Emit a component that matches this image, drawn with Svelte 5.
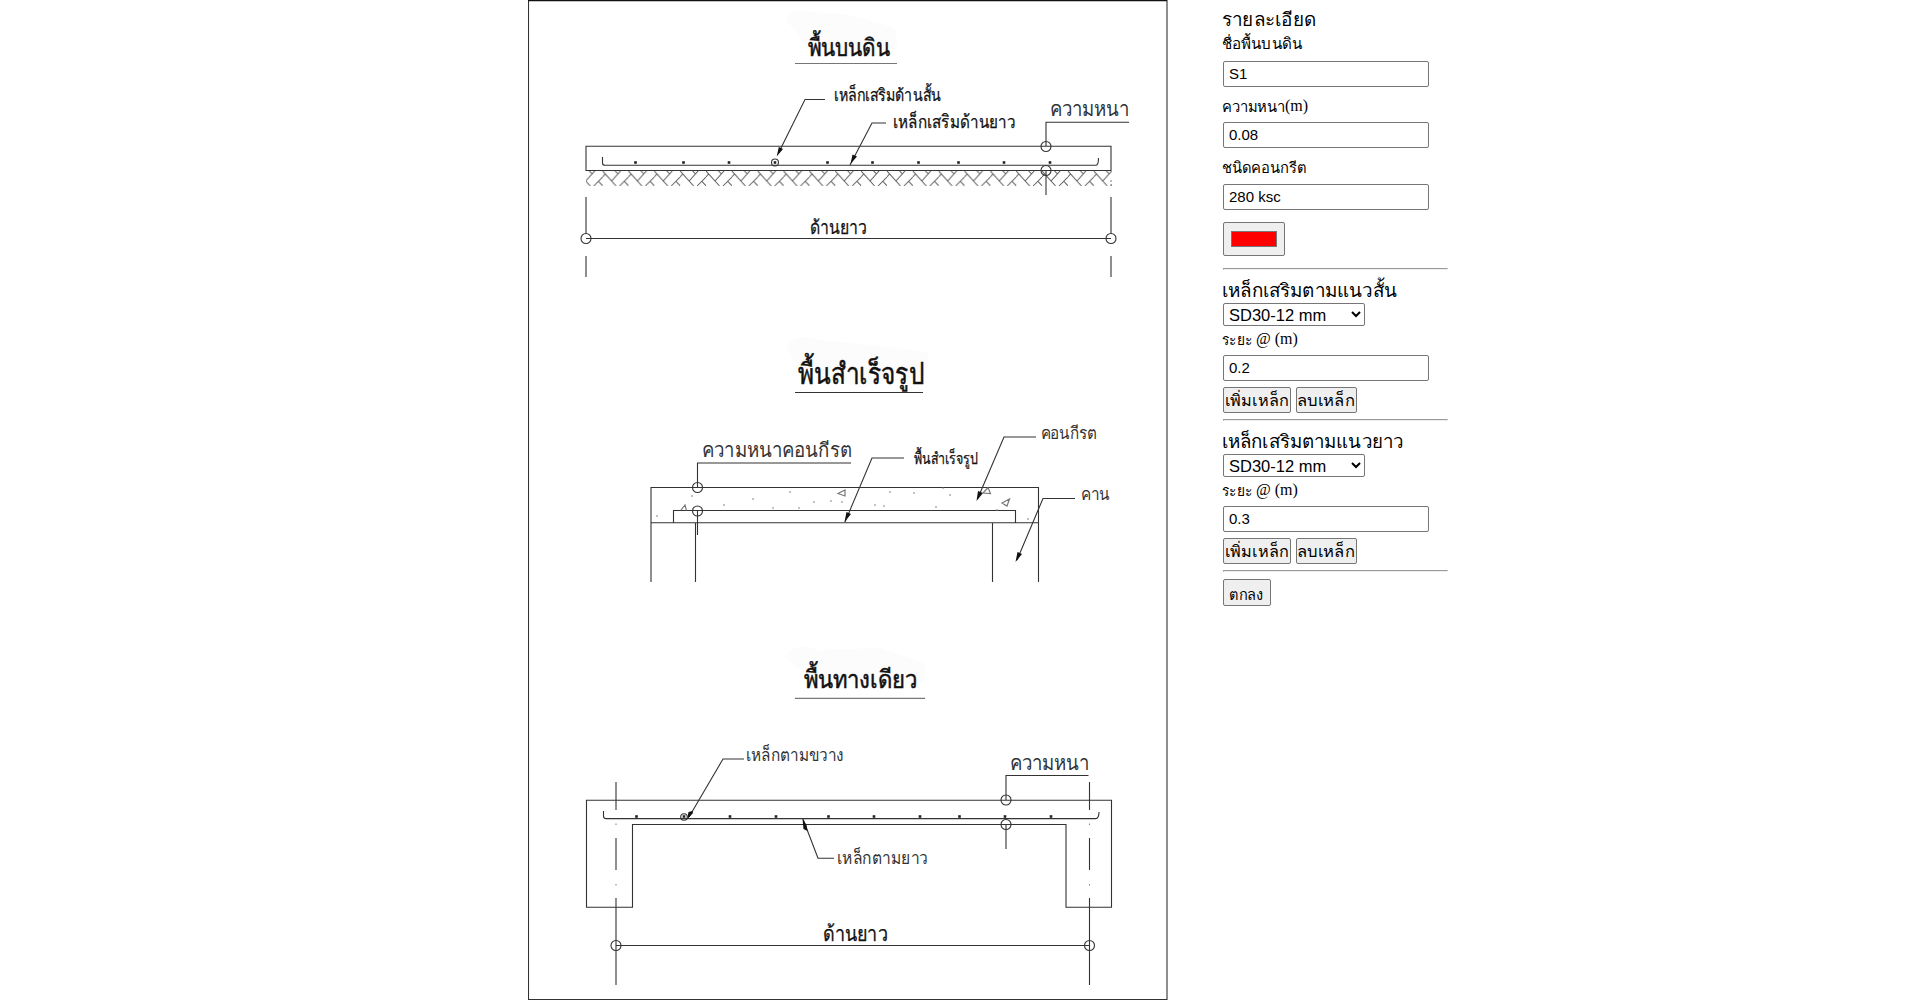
<script>
  let name = $state('S1');
  let thickness = $state('0.08');
  let concrete = $state('280 ksc');
  let color = $state('#ff0000');
  let bars = $state([
    { title: 'เหล็กเสริมตามแนวสั้น', size: 'SD30-12 mm', spacing: '0.2', w: 175 },
    { title: 'เหล็กเสริมตามแนวยาว', size: 'SD30-12 mm', spacing: '0.3', w: 181 }
  ]);

  // Drawing labels: t text, x start, y baseline, w width, s font size, k style
  const labels = [
    { t: 'พื้นบนดิน', x: 807.5, y: 56, w: 82, s: 24, k: 'heavy' },
    { t: 'เหล็กเสริมด้านสั้น', x: 834, y: 101, w: 107, s: 17, k: 'medium' },
    { t: 'เหล็กเสริมด้านยาว', x: 893, y: 127.5, w: 122, s: 18, k: 'medium' },
    { t: 'ความหนา', x: 1049.5, y: 116, w: 80, s: 20, k: 'thin' },
    { t: 'ด้านยาว', x: 810, y: 233.5, w: 57.5, s: 19, k: 'medium' },
    { t: 'พื้นสำเร็จรูป', x: 798, y: 384, w: 126, s: 29, k: 'heavy' },
    { t: 'ความหนาคอนกีรต', x: 702, y: 457, w: 150, s: 20, k: 'thin' },
    { t: 'พื้นสำเร็จรูป', x: 913.5, y: 463.5, w: 64.5, s: 16, k: 'medium' },
    { t: 'คอนกีรต', x: 1040.5, y: 439, w: 56.5, s: 17, k: 'thin' },
    { t: 'คาน', x: 1080.5, y: 500, w: 29, s: 18, k: 'thin' },
    { t: 'พื้นทางเดียว', x: 803.5, y: 688, w: 114, s: 25, k: 'heavy' },
    { t: 'เหล็กตามขวาง', x: 746, y: 760.5, w: 98, s: 18, k: 'thin' },
    { t: 'ความหนา', x: 1009.5, y: 770, w: 80, s: 20, k: 'thin' },
    { t: 'เหล็กตามยาว', x: 837, y: 864, w: 91, s: 18, k: 'thin' },
    { t: 'ด้านยาว', x: 823, y: 940.5, w: 65, s: 21, k: 'medium' }
  ];
  const dotsTop = [635.5, 683.5, 729, 775, 827.5, 872.5, 918.5, 958.5, 1004, 1050];
  const dotsLow = [636.5, 684, 730, 776, 828.5, 874, 920, 959.5, 1005, 1051];
  const rings = [
    [586, 238.5], [1111, 238.5], [1046, 146.5], [1046, 170.5],
    [697.5, 487.5], [697.5, 511], [1006, 800], [1006, 824.5],
    [616, 945.5], [1089.5, 945.5]
  ];
  const grains = [
    [692, 496], [790, 492], [753, 499], [724, 505], [657, 516], [773, 508], [799, 508], [814, 502],
    [831, 501], [842, 502], [875, 505], [884, 506], [890, 492], [914, 493], [943, 488], [950, 495],
    [936, 507], [997, 510], [1028, 519]
  ];
  const clouds = [
    'M785 20 Q792 5 812 12 L850 15 L895 28 L898 48 Q880 60 850 56 L808 50 L795 30Z',
    'M786 346 Q798 332 820 340 L870 345 L928 352 L927 375 L860 388 L798 366Z',
    'M785 656 Q796 642 818 650 L880 648 L926 664 L924 682 L840 684 L797 668Z'
  ];
</script>

{#snippet thai(text, w, cls)}
  <svg class="thai {cls}" width={w + 4} height="24" role="img" aria-label={text}>
    <text x="0" y="18" textLength={w} lengthAdjust="spacingAndGlyphs">{text}</text>
  </svg>
{/snippet}

<main>
  <svg class="drawing" width="640" height="1001" viewBox="528 0 640 1001">
    <defs>
      <pattern id="soil" x="602.6" y="171" width="25.85" height="16" patternUnits="userSpaceOnUse">
        <path class="soil" d="M0 0L13.5 15M9 10L18 0M12.5 0L15.5 3M17 15L25.85 6M0 6L2.5 3M21.5 10L26 15" />
      </pattern>
    </defs>

    {#each clouds as d}<path class="cloud" {d} />{/each}

    <path class="frame" d="M528.5 0V999.5H1167V0" />
    <path class="top" d="M528 .5H1167" />

    <!-- slab on ground -->
    <rect x="586" y="171" width="526" height="15" fill="url(#soil)" />
    <path class="gray" d="M795 63.5H897" />
    <path d="M586 170.5V146.3H1111V170.5Z" />
    <path d="M602.5 157V163Q602.5 165.3 605 165.3H1096Q1098.5 165 1098.5 158" />
    <path d="M825 99.5H805L779 152M886 123H872L850 165M1046 146V122.3H1129M1046 170V195" />
    <path d="M586 197V233.5M586 256V277M1111 197V233.5M1111 256V277M586 238.5H1111" />
    <path class="dots" d="M1111 180V182M1111 184V186" />
    <path class="head" d="M776.7 156.5L778.8 147L783 149ZM850.5 164L852.5 154.5L857 156.5Z" />
    <circle cx="775" cy="162.5" r="3.5" />

    <!-- precast slab -->
    <path d="M795 392.5H923M697.5 487V463H851M697.5 511V535" />
    <path d="M651 582V487.5H1038.5V582M651 522.7H1038.5M673.5 522.7V510.5H1015.5V522.7M695.5 523V582M992.5 523V582" />
    <path d="M904 458H872L845 522M1036 437H1004L977.5 499M1075 498.5H1043L1017 560" />
    <path class="head" d="M844.5 522L846.5 512L851 514ZM976.5 501L978 491L983 493ZM1015.5 562L1017.5 552L1022 554Z" />
    <path class="gray" d="M838 493.5L845 490V496ZM681 510L685 505L686.5 510.5M983 493L988 487.5L990.5 493.5ZM1002 503L1009.5 499L1007 506Z" />
    {#each grains as [x, y]}<circle class="grain" cx={x} cy={y} r=".8" />{/each}

    <!-- one-way slab -->
    <path class="gray" d="M795 698.3H925" />
    <path d="M586.5 907.3V800.3H1111.5V907.3H1066V824.5H632.5V907.3Z" />
    <path d="M603.5 811V816Q603.5 818.6 606 818.6H1096Q1099 818 1099 812" />
    <path d="M744 759H723L689 817M834 858.3H818L803 819M1006 800V775.5H1088.5M1006 824V849" />
    <path d="M616 782V810M616 838V870M616 898V985M1089.5 782V810M1089.5 838V870M1089.5 898V985M616 945.5H1089.5" />
    <path class="dots" d="M616 823.5V825M616 884V885.5M1089.5 823.5V825M1089.5 884V885.5" />
    <path class="head" d="M687 819.5L688.5 812L692.5 811L693 813ZM802.5 819L803.5 829L807.5 831L806.5 825Z" />
    <circle cx="684" cy="817" r="3.3" />

    {#each rings as [x, y]}<circle cx={x} cy={y} r="5" />{/each}
    {#each dotsTop as x}<rect class="dot" x={x - 1.3} y="161.2" width="2.6" height="2.6" />{/each}
    {#each dotsLow as x}<rect class="dot" x={x - 1.3} y="815.2" width="2.6" height="2.6" />{/each}
    {#each labels as l}
      <text class={l.k} x={l.x} y={l.y} font-size={l.s} textLength={l.w} lengthAdjust="spacingAndGlyphs">{l.t}</text>
    {/each}
  </svg>

  <form>
    <h2>{@render thai('รายละเอียด', 94, 'big')}</h2>
    <label class="first" for="name">{@render thai('ชื่อพื้นบนดิน', 80, 'small')}</label>
    <input id="name" bind:value={name} />
    <label class="tall" for="thick">{@render thai('ความหนา', 63, 'small tight')}(m)</label>
    <input id="thick" bind:value={thickness} />
    <label class="taller" for="conc">{@render thai('ชนิดคอนกรีต', 84.5, 'small')}</label>
    <input id="conc" bind:value={concrete} />
    <input type="color" bind:value={color} />
    {#each bars as bar}
      <hr />
      <h2 class="sub">{@render thai(bar.title, bar.w, 'big')}</h2>
      <select bind:value={bar.size}><option>SD30-12 mm</option></select>
      <div class="gap">{@render thai('ระยะ', 30, 'small')}@ (m)</div>
      <input bind:value={bar.spacing} />
      <div class="actions">
        <button type="button" class="add">{@render thai('เพิ่มเหล็ก', 64, 'mid')}</button>
        <button type="button" class="del">{@render thai('ลบเหล็ก', 58, 'mid')}</button>
      </div>
    {/each}
    <hr />
    <button type="button" class="ok">{@render thai('ตกลง', 34, 'small')}</button>
  </form>
</main>

<style>
  :global(body) { background: #fff; }
  main { display: flex; align-items: flex-start; padding-left: 528px; height: 1006px; box-sizing: border-box; overflow: hidden; }
  .drawing { display: block; flex: none; }
  .drawing path, .drawing circle { fill: none; stroke: #333; stroke-width: 1.1; }
  .drawing .soil { stroke: #555; stroke-width: 1; }
  .drawing .cloud { fill: #fcfcfc; stroke: none; }
  .drawing .top { stroke: #111; stroke-width: 1.4; }
  .drawing .gray { stroke: #777; stroke-width: 1.2; }
  .drawing .dots { stroke: #888; }
  .drawing .head { fill: #111; stroke: none; }
  .drawing .grain { fill: #777; stroke: none; }
  .dot { fill: #222; }
  text { font-family: 'Liberation Sans', sans-serif; fill: #111; }
  .heavy { stroke: #111; stroke-width: .5; }
  .medium { stroke: #111; stroke-width: .25; }
  .thin { fill: #333; }

  form { display: flex; flex-direction: column; align-items: flex-start; width: 225px; margin-left: 55px; padding-top: 8px; font: 16px 'Liberation Serif', serif; color: #000; }
  .thai { display: block; flex: none; overflow: visible; }
  .thai text { fill: #000; }
  .big text { font-size: 18.5px; }
  .mid text { font-size: 16px; }
  .small text { font-size: 15px; }
  .tight { margin-right: -4px; }
  h2 { margin: 0 0 0 -1px; height: 24px; font-weight: 400; }
  h2.sub { box-sizing: border-box; height: 33px; padding-top: 9px; }
  label, .gap { display: flex; align-items: center; }
  label .thai, .gap .thai { margin-left: -1px; }
  .first { box-sizing: border-box; height: 29px; padding-bottom: 7px; }
  .tall, .taller { height: 35px; padding-top: 2px; box-sizing: border-box; }
  .taller { height: 36px; }
  .gap { box-sizing: border-box; height: 29px; padding-bottom: 3px; }
  input, select, button { box-sizing: border-box; margin: 0; border: 1px solid #767676; border-radius: 2px; color: #000; }
  input { width: 206px; height: 26px; padding: 0 5px 2px; font: 15px 'Liberation Sans', Arial, sans-serif; background: #fff; }
  input[type='color'] { width: 62px; height: 34px; margin-top: 12px; padding: 4px 5px; background: #efefef; }
  select { width: 142px; height: 23px; padding: 0 1px; font: 16.5px 'Liberation Sans', Arial, sans-serif; background: #fff; }
  hr { box-sizing: border-box; width: 225px; height: 2px; margin: 6px 0 0; border: 1px solid; border-color: #9a9a9a #eee #eee #9a9a9a; }
  input[type='color'] + hr { margin-top: 12px; }
  .actions { display: flex; gap: 5px; margin-top: 6px; }
  button { display: flex; align-items: center; height: 26px; padding: 0 0 0 1px; background: #efefef; overflow: hidden; }
  .add { width: 68px; }
  .del { width: 61px; padding-left: 0; }
  .ok { width: 48px; height: 27px; margin-top: 7px; padding: 2px 0 0 5px; }
</style>
